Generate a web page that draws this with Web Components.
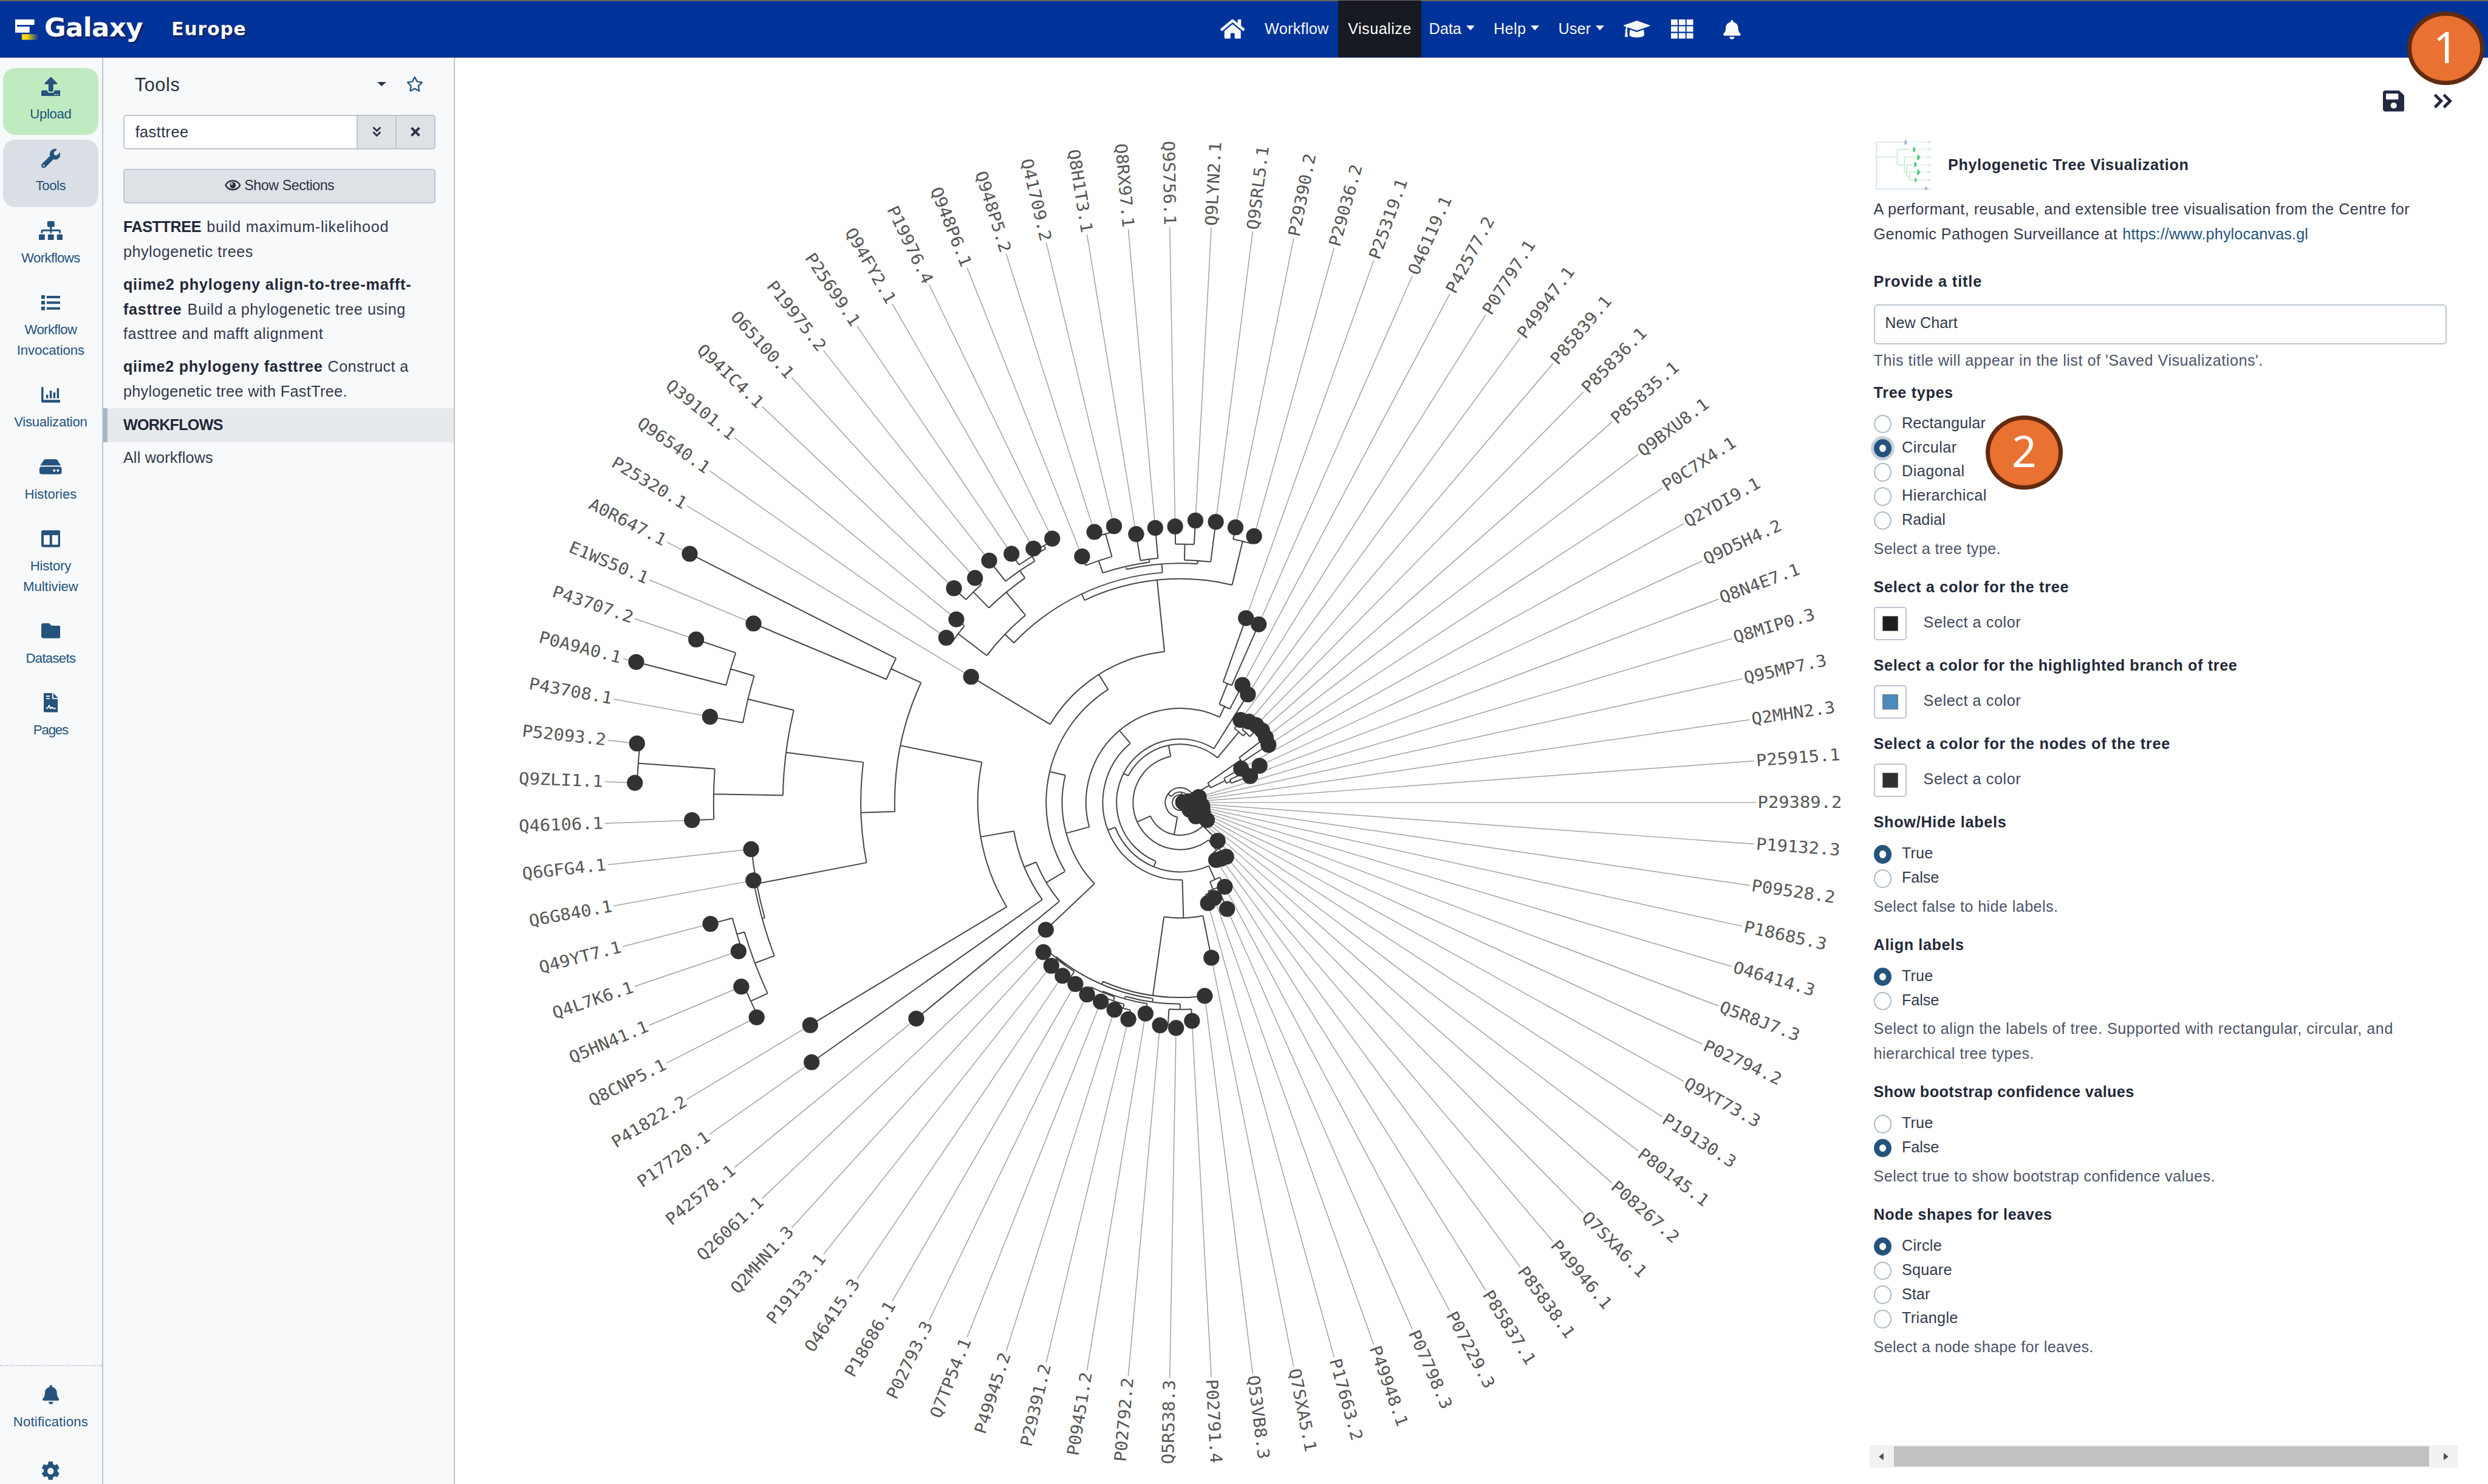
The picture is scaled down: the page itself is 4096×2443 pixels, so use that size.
<!DOCTYPE html>
<html lang="en">
<head>
<meta charset="utf-8">
<title>Galaxy Europe</title>
<style>
html,body{margin:0;padding:0;width:4096px;height:2443px;overflow:hidden;background:#fff}
</style>
</head>
<body>
<galaxy-app></galaxy-app>
<script>
const ICONS = {
  home:['0 32 576 448','<path d="M280.37 148.26L96 300.11V464a16 16 0 0 0 16 16l112.06-.29a16 16 0 0 0 15.92-16V368a16 16 0 0 1 16-16h64a16 16 0 0 1 16 16v95.64a16 16 0 0 0 16 16.05L464 480a16 16 0 0 0 16-16V300L295.67 148.26a12.19 12.19 0 0 0-15.3 0zM571.6 251.47L488 182.56V44.05a12 12 0 0 0-12-12h-56a12 12 0 0 0-12 12v72.61L318.47 43a48 48 0 0 0-61 0L4.34 251.47a12 12 0 0 0-1.6 16.9l25.5 31A12 12 0 0 0 45.15 301l235.22-193.74a12.19 12.19 0 0 1 15.3 0L530.9 301a12 12 0 0 0 16.9-1.6l25.5-31a12 12 0 0 0-1.7-16.93z"/>'],
  upload:['0 0 512 512','<path d="M296 384h-80c-13.3 0-24-10.7-24-24V192h-87.7c-17.8 0-26.7-21.5-14.1-34.1L242.3 5.7c7.5-7.5 19.8-7.5 27.3 0l152.2 152.2c12.6 12.6 3.7 34.1-14.1 34.1H320v168c0 13.3-10.7 24-24 24zm216-8v112c0 13.3-10.7 24-24 24H24c-13.3 0-24-10.7-24-24V376c0-13.3 10.7-24 24-24h136v8c0 30.9 25.1 56 56 56h80c30.9 0 56-25.1 56-56v-8h136c13.3 0 24 10.7 24 24zm-124 88c0-11-9-20-20-20s-20 9-20 20 9 20 20 20 20-9 20-20zm64 0c0-11-9-20-20-20s-20 9-20 20 9 20 20 20 20-9 20-20z"/>'],
  wrench:['0 0 512 512','<path d="M507.73 109.1c-2.24-9.03-13.54-12.09-20.12-5.51l-74.36 74.36-67.88-11.31-11.31-67.88 74.36-74.36c6.62-6.62 3.43-17.9-5.66-20.16-47.38-11.74-99.55.91-136.58 37.93-39.64 39.64-50.55 97.1-34.05 147.2L18.74 402.76c-24.99 24.99-24.99 65.51 0 90.5 24.99 24.99 65.51 24.99 90.5 0l213.21-213.21c50.12 16.71 107.47 5.68 147.37-34.22 37.07-37.07 49.7-89.32 37.91-136.73zM64 472c-13.25 0-24-10.75-24-24 0-13.26 10.75-24 24-24s24 10.74 24 24c0 13.25-10.75 24-24 24z"/>'],
  sitemap:['0 0 640 512','<path d="M128 352H32c-17.67 0-32 14.33-32 32v96c0 17.67 14.33 32 32 32h96c17.67 0 32-14.33 32-32v-96c0-17.67-14.33-32-32-32zm-24-80h192v48h48v-48h192v48h48v-57.59c0-21.17-17.23-38.41-38.41-38.41H344v-64h40c17.67 0 32-14.33 32-32V32c0-17.67-14.33-32-32-32H256c-17.67 0-32 14.33-32 32v96c0 17.67 14.33 32 32 32h40v64H94.41C73.23 224 56 241.23 56 262.41V320h48v-48zm264 80h-96c-17.67 0-32 14.33-32 32v96c0 17.67 14.33 32 32 32h96c17.67 0 32-14.33 32-32v-96c0-17.67-14.33-32-32-32zm240 0h-96c-17.67 0-32 14.33-32 32v96c0 17.67 14.33 32 32 32h96c17.67 0 32-14.33 32-32v-96c0-17.67-14.33-32-32-32z"/>'],
  list:['0 0 32 27','<path d="M0 1h6v6H0zM0 10.5h6v6H0zM0 20h6v6H0zM9 2h23v4H9zM9 11.500h23v4H9zM9 21h23v4H9z"/>'],
  chart:['0 0 32 26','<path d="M1 0h2.500v21.500H31a1 1 0 0 1 1 1V25a1 1 0 0 1-1 1H2a2 2 0 0 1-2-2V1a1 1 0 0 1 1-1zM8 13h3.500v6H8zM14 6h3.500v13H14zM20 9h3.500v10H20zM26 2h3.500v17H26z"/>'],
  hdd:['0 64 576 384','<path d="M576 304v96c0 26.51-21.49 48-48 48H48c-26.51 0-48-21.49-48-48v-96c0-26.51 21.49-48 48-48h480c26.51 0 48 21.49 48 48zm-48-80a79.557 79.557 0 0 1 30.777 6.165L462.25 85.374A48.003 48.003 0 0 0 422.311 64H153.689a48 48 0 0 0-39.938 21.374L17.223 230.165A79.557 79.557 0 0 1 48 224h480zm-48 96c-17.673 0-32 14.327-32 32s14.327 32 32 32 32-14.327 32-32-14.327-32-32-32zm-96 0c-17.673 0-32 14.327-32 32s14.327 32 32 32 32-14.327 32-32-14.327-32-32-32z"/>'],
  columns:['0 32 512 448','<path d="M464 32H48C21.49 32 0 53.49 0 80v352c0 26.51 21.49 48 48 48h416c26.51 0 48-21.49 48-48V80c0-26.51-21.49-48-48-48zM224 416H64V160h160v256zm224 0H288V160h160v256z"/>'],
  folder:['0 64 512 384','<path d="M464 128H272l-64-64H48C21.49 64 0 85.49 0 112v288c0 26.51 21.49 48 48 48h416c26.51 0 48-21.49 48-48V176c0-26.51-21.49-48-48-48z"/>'],
  page:['0 0 24 32','<path fill-rule="evenodd" d="M1.500 0H14v8.500a1.500 1.500 0 0 0 1.500 1.500H24v20.500a1.500 1.500 0 0 1-1.500 1.500h-21A1.500 1.500 0 0 1 0 30.500v-29A1.500 1.500 0 0 1 1.500 0zM4 4v2h6V4zM4 8v2h6V8zM4 26h3l2-3 1.500 3.500h2L14 25l1.500 1.500H20V24.500h-3.500L14 22.500l-2 1.500-2.500-4.500h-1L6 24H4z"/><path d="M16 0l8 8h-8z"/>'],
  bell:['0 0 448 512','<path d="M224 512c35.32 0 63.97-28.65 63.97-64H160.03c0 35.35 28.65 64 63.97 64zm215.39-149.71c-19.32-20.76-55.47-51.99-55.47-154.29 0-77.7-54.48-139.9-127.94-155.16V32c0-17.67-14.32-32-31.98-32s-31.98 14.33-31.98 32v20.84C118.56 68.1 64.08 130.3 64.08 208c0 102.3-36.15 133.53-55.47 154.29-6 6.45-8.66 14.16-8.61 21.71.11 16.4 12.98 32 32.1 32h383.8c19.12 0 32-15.6 32.1-32 .05-7.55-2.61-15.27-8.61-21.71z"/>'],
  cog:['-16 -16 32 32','<path fill-rule="evenodd" d="M-3.700-16h7.400l.7 4.300 2.900 1.700 4.100-1.600 3.800 6.500-3.400 2.700v3.300l3.400 2.700-3.800 6.500-4.100-1.600-2.900 1.700-.7 4.300h-7.400l-.7-4.300-2.900-1.700-4.100 1.600-3.800-6.500 3.400-2.700v-3.300l-3.400-2.700 3.800-6.500 4.100 1.600 2.900-1.700zM0-5.500a5.500 5.500 0 1 0 0 11a5.500 5.500 0 1 0 0-11z"/>'],
  save:['0 32 448 448','<path d="M433.941 129.941l-83.882-83.882A48 48 0 0 0 316.118 32H48C21.49 32 0 53.49 0 80v352c0 26.51 21.49 48 48 48h352c26.51 0 48-21.49 48-48V163.882a48 48 0 0 0-14.059-33.941zM224 416c-35.346 0-64-28.654-64-64 0-35.346 28.654-64 64-64s64 28.654 64 64c0 35.346-28.654 64-64 64zm96-304.52V212c0 6.627-5.373 12-12 12H76c-6.627 0-12-5.373-12-12V108c0-6.627 5.373-12 12-12h228.52c3.183 0 6.235 1.264 8.485 3.515l3.48 3.48A11.996 11.996 0 0 1 320 111.48z"/>'],
  star:['20 0 536 512','<path d="M528.1 171.5L382 150.2 316.7 17.8c-11.7-23.6-45.6-23.9-57.4 0L194 150.2 47.9 171.5c-26.2 3.8-36.7 36.1-17.7 54.6l105.7 103-25 145.5c-4.500 26.300 23.200 46 46.400 33.700L288 439.600l130.700 68.700c23.200 12.200 50.900-7.400 46.400-33.700l-25-145.500 105.700-103c19-18.500 8.500-50.800-17.700-54.600zM388.600 312.300l23.700 138.400L288 385.400l-124.300 65.300 23.700-138.400-100.600-98 139-20.200 62.200-126 62.200 126 139 20.200-100.600 98z"/>'],
  eye:['0 0 28 18','<path fill="none" stroke="currentColor" stroke-width="2.600" d="M1.500 9C4 4.200 8.500 1.500 14 1.500S24 4.200 26.500 9C24 13.800 19.500 16.500 14 16.500S4 13.800 1.500 9z"/><circle cx="14" cy="9" r="5.200"/><circle cx="12.300" cy="7" r="1.600" fill="#dee2e6"/>'],
  grad:['0 0 44 28','<path d="M22 0l21.500 7.500a.8.800 0 0 1 0 1.500L22 16.500 7 11.300c-.8.700-1.300 2-1.400 3.200 1.200.8 1.200 2.300.2 3.100L7 27H2l1.200-9.400c-1-.8-1-2.300.1-3.100.1-1.600.5-3 1.300-4.100L.5 9a.8.800 0 0 1 0-1.500z"/><path d="M10.500 15L22 19l11.500-4 1 8.500c0 2.500-5.600 4.500-12.500 4.500S9.500 26 9.500 23.500z"/>'],
  grid:['0 0 37 32','<path d="M0 0h11v9.300H0zM13 0h11v9.300H13zM26 0h11v9.300H26zM0 11.300h11v9.300H0zM13 11.300h11v9.300H13zM26 11.300h11v9.300H26zM0 22.700h11V32H0zM13 22.700h11V32H13zM26 22.700h11V32H26z"/>'],
  caret:['0 0 14 7','<path d="M0 0h14L7 7z"/>'],
  down2:['0 0 16 18','<path fill="none" stroke="currentColor" stroke-width="3" d="M1.500 1.500L8 7.500l6.500-6M1.500 9.500L8 15.500l6.500-6"/>'],
  right2:['0 0 32 24','<path fill="none" stroke="currentColor" stroke-width="4.800" d="M2.500 2L13 12 2.500 22M17.500 2L28 12 17.500 22"/>'],
  times:['0 0 16 16','<path fill="none" stroke="currentColor" stroke-width="4" d="M1.500 1.500l13 13M14.500 1.500l-13 13"/>'],
  left:['0 0 8 12','<path d="M8 0v12L0 6z"/>'],
  right:['0 0 8 12','<path d="M0 0v12l8-6z"/>']
};

function define(name, render) {
  customElements.define(name, class extends HTMLElement {
    connectedCallback() {
      if (this.shadowRoot) return;
      const root = this.attachShadow({mode:'open'});
      root.innerHTML = render(this);
    }
  });
}
const A = (el, n, d='') => el.getAttribute(n) ?? d;

/* Icon stretched to a given box */
define('gx-icon', el => {
  const [vb, body] = ICONS[A(el,'name')];
  return `<style>:host{display:block;flex:none;width:${A(el,'w')}px;height:${A(el,'h')}px}svg{display:block;width:100%;height:100%;fill:currentColor}</style>
  <svg viewBox="${vb}" preserveAspectRatio="none">${body}</svg>`;
});

/* One line of text tracked to a given width */
const pen = document.createElement('canvas').getContext('2d');
customElements.define('fit-text', class extends HTMLElement {
  connectedCallback() {
    if (this.shadowRoot) return;
    this.attachShadow({mode:'open'}).innerHTML =
      '<style>:host{display:inline-block;white-space:pre}span{display:inline-block}</style><span><slot></slot></span>';
    const w = +A(this,'w'), t = this.textContent, cs = getComputedStyle(this), fs = parseFloat(cs.fontSize);
    pen.font = `${cs.fontWeight} 100px ${cs.fontFamily}`;
    const m = pen.measureText(t).width / 100;
    this.shadowRoot.querySelector('span').style.letterSpacing = ((w / fs - m) / t.length).toFixed(4) + 'em';
    this.style.width = w + 'px';
  }
});

define('nav-item', el => `<style>
  :host{display:flex;align-items:center;box-sizing:border-box;height:94px;padding:0 16px;color:#f8f9fa;font-size:25.500px}
  :host([active]){background:#171a22;color:#fff}
  gx-icon{margin:0 0 4px 8px}
  </style><fit-text w="${A(el,'w')}">${A(el,'label')}</fit-text>${el.hasAttribute('menu')?'<gx-icon name="caret" w="14" h="8"></gx-icon>':''}`);

define('gx-masthead', () => `<style>
  :host{display:flex;align-items:center;box-sizing:border-box;height:96px;flex:none;background:#003399;border-top:2.500px solid #66665e;border-bottom:1px solid #1d3f8f;color:#fff}
  .brand{display:flex;align-items:center;width:2035px;font-family:"DejaVu Sans",sans-serif;font-weight:bold;text-shadow:2px 2px 3px #0a1d55}
  .brand svg{margin-left:25px;width:40px;height:34px;margin-top:2px}
  .g{font-size:44px;margin:-5px 0 0 9px}.e{font-size:30px;margin:0 0 0 48px}
  gx-icon{color:#f8f9fa}
  </style>
  <div class="brand"><svg viewBox="0 0 40 34"><defs><linearGradient id="y"><stop offset=".3" stop-color="#ffd800"/><stop offset="1" stop-color="#ffd800" stop-opacity="0"/></linearGradient></defs>
  <path fill="#fff" d="M0 0h32v9H0zM0 12h24v10H0zM0 8h3v6H0z"/><path fill="url(#y)" d="M11 24.500h28V34H11z"/></svg>
  <fit-text class="g" w="164">Galaxy</fit-text><fit-text class="e" w="125">Europe</fit-text></div>
  <gx-icon name="home" w="41" h="32"></gx-icon>
  <nav-item style="margin-left:17px" label="Workflow" w="107"></nav-item>
  <nav-item style="margin-right:-3px" active label="Visualize" w="106"></nav-item>
  <nav-item label="Data" menu w="54"></nav-item><nav-item label="Help" menu w="54"></nav-item><nav-item label="User" menu w="54" style="padding-right:0"></nav-item>
  <gx-icon style="margin-left:33px" name="grad" w="44" h="28"></gx-icon>
  <gx-icon style="margin-left:35px" name="grid" w="37" h="32"></gx-icon>
  <gx-icon style="margin:2px 0 0 50px" name="bell" w="29" h="32"></gx-icon>`);

define('activity-item', el => `<style>
  :host{display:flex;flex-direction:column;align-items:center;box-sizing:border-box;width:159px;flex:none;padding-bottom:18px;border-radius:20px;color:#25537b;background:${A(el,'bg','transparent')};font-size:22.500px;line-height:34px}
  .i{height:60px;display:flex;align-items:center;box-sizing:border-box;padding-top:3px}
  </style><div class="i"><gx-icon name="${A(el,'icon')}" w="${A(el,'iw')}" h="${A(el,'ih')}"></gx-icon></div>
  ${A(el,'label').split('|').map((t,i)=>`<fit-text w="${A(el,'w').split('|')[i]}">${t}</fit-text>`).join('')}`);

define('activity-bar', () => `<style>
  :host{display:flex;flex-direction:column;justify-content:space-between;box-sizing:border-box;width:172.500px;flex:none;background:#f8f9fb;border-right:2.500px solid #bdc6d0}
  div{display:flex;flex-direction:column;gap:8px;padding:17px 0 0 5px}
  .b{border-top:2.500px dotted #bdc6d0;height:199px;box-sizing:border-box;padding-top:16px;gap:16px;overflow:hidden}
  </style><div>
  <activity-item bg="#c0ebc0" icon="upload" iw="32" ih="32" label="Upload" w="69"></activity-item>
  <activity-item bg="#dadfe5" icon="wrench" iw="32" ih="32" label="Tools" w="50"></activity-item>
  <activity-item icon="sitemap" iw="40" ih="32" label="Workflows" w="98"></activity-item>
  <activity-item icon="list" iw="32" ih="27" label="Workflow|Invocations" w="87|113"></activity-item>
  <activity-item icon="chart" iw="32" ih="26" label="Visualization" w="122"></activity-item>
  <activity-item icon="hdd" iw="37" ih="25" label="Histories" w="87"></activity-item>
  <activity-item icon="columns" iw="32" ih="28" label="History|Multiview" w="68|92"></activity-item>
  <activity-item icon="folder" iw="32" ih="25" label="Datasets" w="83"></activity-item>
  <activity-item icon="page" iw="24" ih="32" label="Pages" w="58"></activity-item></div>
  <div class="b"><activity-item icon="bell" iw="28" ih="32" label="Notifications" w="125"></activity-item>
  <activity-item icon="cog" iw="31" ih="32" label=" " w="1"></activity-item></div>`);

define('tool-entry', () => `<style>:host{display:block;font-size:25.500px;line-height:41px;color:#33384a;padding-left:33px;margin-bottom:14px}</style><slot></slot>`);

define('tool-panel', () => `<style>
  :host{display:flex;flex-direction:column;box-sizing:border-box;width:586.500px;flex:none;background:#f8f9fb;border-right:2.500px solid #bdc6d0;color:#2c3143}
  .head{display:flex;align-items:center;height:89px;padding:0 0 0 52px;font-size:31px}
  .head fit-text{margin-top:2px}
  .sp{flex:1}
  .search{display:flex;box-sizing:border-box;margin:6px 0 0 33px;width:521px;height:58px;border:2.500px solid #bcc5d0;border-radius:5px;background:#fff;overflow:hidden;font-size:25.500px}
  .in{flex:1;display:flex;align-items:center;padding-left:18px}
  .bt{width:65px;box-sizing:border-box;background:#dee2e6;border-left:2.500px solid #bcc5d0;display:flex;align-items:center;justify-content:center}
  .show{display:flex;align-items:center;justify-content:center;gap:6px;box-sizing:border-box;margin:33px 0 19px 33px;width:521px;height:57px;border:2.500px solid #bcc5d0;border-radius:5px;background:#dee2e6;font-size:23.500px;padding-bottom:3px}
  b{font-weight:bold;color:#222838}
  .wf{height:57px;box-sizing:border-box;display:flex;align-items:center;background:#e7eaed;border-left:8px solid #a9b5c3;padding-left:26px;font-size:25.500px;margin:-6px 0 5px;padding-bottom:1px}
  </style>
  <div class="head"><fit-text w="76">Tools</fit-text><span class="sp"></span><gx-icon name="caret" w="15" h="7"></gx-icon><gx-icon style="margin:0 52px 0 35px;color:#25537b" name="star" w="26" h="25"></gx-icon></div>
  <div class="search"><div class="in"><fit-text w="89">fasttree</fit-text></div><div class="bt"><gx-icon name="down2" w="15" h="18"></gx-icon></div><div class="bt"><gx-icon name="times" w="16" h="16"></gx-icon></div></div>
  <div class="show"><gx-icon name="eye" w="27" h="18"></gx-icon><fit-text w="150">Show Sections</fit-text></div>
  <tool-entry><b><fit-text w="130">FASTTREE</fit-text></b> <fit-text w="304" style="margin-left:2px">build maximum-likelihood</fit-text><br><fit-text w="217">phylogenetic trees</fit-text></tool-entry>
  <tool-entry><b><fit-text w="481">qiime2 phylogeny align-to-tree-mafft-</fit-text><br><fit-text w="98">fasttree</fit-text></b> <fit-text w="364" style="margin-left:2px">Build a phylogenetic tree using</fit-text><br><fit-text w="334">fasttree and mafft alignment</fit-text></tool-entry>
  <tool-entry><b><fit-text w="333">qiime2 phylogeny fasttree</fit-text></b> <fit-text w="135" style="margin-left:1px">Construct a</fit-text><br><fit-text w="374">phylogenetic tree with FastTree.</fit-text></tool-entry>
  <div class="wf"><b><fit-text w="166">WORKFLOWS</fit-text></b></div>
  <tool-entry><fit-text w="150">All workflows</fit-text></tool-entry>`);

/* Circular phylogram: leaves are numbered clockwise from three o'clock */
const LABELS = 'P29389.2 P19132.3 P09528.2 P18685.3 O46414.3 Q5R8J7.3 P02794.2 Q9XT73.3 P19130.3 P80145.1 P08267.2 Q7SXA6.1 P49946.1 P85838.1 P85837.1 P07229.3 P07798.3 P49948.1 P17663.2 Q7SXA5.1 Q53VB8.3 P02791.4 Q5R538.3 P02792.2 P09451.2 P29391.2 P49945.2 Q7TP54.1 P02793.3 P18686.1 O46415.3 P19133.1 Q2MHN1.3 Q26061.1 P42578.1 P17720.1 P41822.2 Q8CNP5.1 Q5HN41.1 Q4L7K6.1 Q49YT7.1 Q6G840.1 Q6GFG4.1 Q46106.1 Q9ZLI1.1 P52093.2 P43708.1 P0A9A0.1 P43707.2 E1WS50.1 A0R647.1 P25320.1 Q96540.1 Q39101.1 Q94IC4.1 O65100.1 P19975.2 P25699.1 Q94FY2.1 P19976.4 Q948P6.1 Q948P5.2 Q41709.2 Q8H1T3.1 Q8RX97.1 Q9S756.1 Q9LYN2.1 Q9SRL5.1 P29390.2 P29036.2 P25319.1 O46119.1 P42577.2 P07797.1 P49947.1 P85839.1 P85836.1 P85835.1 Q9BXU8.1 P0C7X4.1 Q2YDI9.1 Q9D5H4.2 Q8N4E7.1 Q8MIP0.3 Q95MP7.3 Q2MHN2.3 P25915.1'.split(' ');
const RADII = [18,24,37,38,36,38,42,30,53.4,20,35,89.4,118.7,116,113,159,194,169,174,264,325,364.6,376,373,356.6,371.5,362.4,357.5,355.7,349.4,349.2,346.7,338,308.4,568.7,751.8,720,791.9,793.6,777.1,809,723.4,719.6,814.6,909.9,911,797,936.9,851.7,771.5,917,406.8,477.1,482.3,519.5,507.2,514,501,489,489,441.8,473.3,473.9,453.6,459.8,460.4,471,471.9,468,460.9,326.5,324.7,221.8,212.8,170.7,177,181,182,179.4,175.9,116.4,146,124.7,32.4,28,14,5];
const n = (r, ...c) => ({r, c});
const N1 = n(476, n(531.3,50,49), n(532.5, n(662.5, n(741,n(782,48,47),46), n(778,n(906,45,44),43)), n(719,42,n(723.4,41,n(758,n(771,40,39),n(789,38,37))))));
const N6 = n(223.5, n(260,n(281.3,n(337.5,N1,36),35),34),
  n(253, 51, n(373,
    n(384.5, n(405, n(465,52,53), n(455, n(492,54,55), n(470,56,n(479,57,n(485,58,59))))),
      n(399, n(404,n(425.5,60,n(465,61,62)),n(409,63,64)), n(404.5,n(431,65,66),67))),
    n(448,68,69))));
const N8 = n(157, n(196.8,33,N6), n(176.5,n(213.5,70,71),72));
const D = n(192.5, 19, n(325,20,n(330, n(336,n(345,21,n(371,22,23)),n(340,24,n(342,n(349,n(356,25,26),27),28))), n(331.5,32,n(332.5,31,n(345,29,30))))));
const N10 = n(115.8, n(141,15,n(155,16,n(159,17,18))), n(129,D,N8));
const N13 = n(78.5, n(97.3, n(106,N10,73), n(153,74,n(160,75,n(170,76,77)))), n(100,12,n(108,13,14)));
const ROOT = n(13, n(17.5, n(24.8, n(54.5,11,N13), n(56.5,n(123.5,78,79),n(83.5,80,n(91,81,82)))), 83), 3);

function treeSvg() {
  const CX = 1968.3, CY = 1338, STEP = 2*Math.PI/LABELS.length, R = 960;
  const pt = (r,k) => `${(CX+r*Math.cos(k*STEP)).toFixed(1)} ${(CY+r*Math.sin(k*STEP)).toFixed(1)}`;
  let d = '';
  const walk = node => {
    if (typeof node === 'number') return {k:node, r:RADII[node]};
    const kids = node.c.map(walk);
    const ks = kids.map(c => c.k), lo = Math.min(...ks), hi = Math.max(...ks);
    kids.forEach(c => d += `M${pt(c.r,c.k)}L${pt(node.r,c.k)}`);
    d += `M${pt(node.r,lo)}A${node.r} ${node.r} 0 ${(hi-lo)*STEP>Math.PI?1:0} 1 ${pt(node.r,hi)}`;
    return {k:(lo+hi)/2, r:node.r};
  };
  walk(ROOT);
  let leaders = '', dots = '', texts = '';
  LABELS.forEach((t,k) => {
    const a = k*360/LABELS.length, flip = a > 90 && a < 270;
    leaders += `M${pt(RADII[k],k)}L${pt(R,k)}`;
    const [x,y] = pt(RADII[k],k).split(' ');
    dots += `<circle cx="${x}" cy="${y}" r="13.300"/>`;
    const [tx,ty] = pt(R+3,k).split(' ');
    texts += `<text x="${tx}" y="${ty}" dy="9" text-anchor="${flip?'end':'start'}" textLength="140.500" lengthAdjust="spacingAndGlyphs" transform="rotate(${(flip?a+180:a).toFixed(2)} ${tx} ${ty})">${t}</text>`;
  });
  return `<svg viewBox="759 96 2341 2379"><path d="${leaders}" fill="none" stroke="#a0a0a0" stroke-width="1.500"/><path d="${d}" fill="none" stroke="#444" stroke-width="2"/><g fill="#323232">${dots}</g><g fill="#555" font-family="'DejaVu Sans Mono',monospace" font-size="27.500">${texts}</g></svg>`;
}
define('phylo-tree', () => `<style>:host{display:block;width:2341px;height:2379px;flex:none;background:#fff}svg{display:block;width:100%;height:100%}</style>${treeSvg()}`);

define('radio-row', el => `<style>
  :host{display:flex;align-items:center;height:40.300px;font-size:25.500px}
  i{display:block;box-sizing:border-box;width:30px;height:31px;border-radius:50%;border:2.600px solid #adb9c8;background:#fff;margin:1px 17px 0 0}
  :host([on]) i{border:9.500px solid #25537b}
  :host([focus]) i{box-shadow:0 0 0 5px #c5d0db}
  fit-text{margin-top:-3px}
  </style><i></i><fit-text w="${A(el,'w')}">${A(el,'label')}</fit-text>`);

define('color-row', el => `<style>
  :host{display:flex;align-items:center;font-size:25.500px;height:56px}
  i{display:flex;align-items:center;justify-content:center;box-sizing:border-box;width:55px;height:56px;border:2.600px solid #bcc5d0;border-radius:5px;margin-right:28px}
  i::before{content:"";width:24px;height:24px;border:2px solid #777;background:${A(el,'color')}}
  fit-text{margin-top:-4px;color:#40465a}
  </style><i></i><fit-text w="163">Select a color</fit-text>`);

define('form-section', el => `<style>
  :host{display:block;margin-bottom:${A(el,'gap','23.300')}px;line-height:41px;font-size:25.500px;color:#343a4c}
  .t{display:block;font-weight:bold;color:#222838;margin-bottom:${A(el,'lead','12.500')}px}
  .h{display:block;margin-top:6px;color:#4d5468}
  </style><div class="t"><fit-text w="${A(el,'w')}">${A(el,'label')}</fit-text></div><slot></slot><div class="h"><slot name="help"></slot></div>`);

define('gx-badge', el => `<style>:host{position:absolute;left:${A(el,'x')}px;top:${A(el,'y')}px;box-sizing:border-box;width:129px;height:123px;border:8px solid #612b10;border-radius:50%;background:#e97132;color:#fff;font:72px/103px "Noto Sans",sans-serif;text-align:center}</style><slot></slot>`);

define('viz-panel', () => `<style>
  :host{display:flex;flex-direction:column;flex:1;box-sizing:border-box;padding-left:24.500px;background:#fff;color:#343a4c;font-size:25.500px;line-height:41px}
  .bar{display:flex;align-items:center;height:144px;box-sizing:border-box;color:#222940;padding:1px 0 0 849px}
  .hd{display:flex;align-items:center;gap:27px;height:85px;margin-top:-7.500px;font-weight:bold;color:#222838}
  .hd svg{width:97px;height:85px;display:block}
  .desc{margin:10.500px 0 37px;line-height:42px}
  .desc a{color:#25537b}
  .in{display:flex;align-items:center;box-sizing:border-box;width:956px;height:66px;border:2.600px solid #bcc5d0;border-radius:6px;padding:0 0 5px 17px}
  .scroll{display:flex;align-items:center;justify-content:space-between;box-sizing:border-box;width:982px;height:37px;background:#f1f1f1;margin:144px 0 0 -7px;padding:0 16px;color:#505050}
  .th{width:893px;height:33px;background:#c1c1c1;margin-right:8px}
  </style>
  <div class="bar"><gx-icon name="save" w="36" h="35"></gx-icon><gx-icon style="margin-left:48px" name="right2" w="32" h="25"></gx-icon></div>
  <div class="hd"><svg viewBox="0 0 97 85" fill="none" stroke-width="2"><path stroke="#dbe5f0" d="M4 4h49M4 4v78h91"/><path stroke="#eef2f6" d="M56 4h38"/>
   <path stroke="#c9efd6" d="M4 29h35M60 16H43q-4 0-4 4v18q0 4 4 4h8M70 29H51v25h4M64 42H55v20h5M72 54H60v13h8" /><path stroke="#e9f7ee" d="M70 16h24M78 29h16M72 42h22M78 54h16M74 67h22"/>
   <path fill="#9fbbd6" d="M51 1h4v7h-4zM85 79h4v6h-4z"/><path fill="#5bcb83" d="M65 13h4v7h-4zM74 25l4 4-4 5h-2v-9zM67 38h4v7h-4zM74 50l4 4-4 5h-2v-9zM68 63l5 4-5 5z"/><path fill="#e3edea" d="M89 2h6v4h-6zM89 14h6v4h-6zM89 27h6v4h-6zM89 40h6v4h-6zM89 52h6v4h-6zM89 65h6v4h-6z"/></svg><fit-text w="402">Phylogenetic Tree Visualization</fit-text></div>
  <div class="desc"><fit-text w="896">A performant, reusable, and extensible tree visualisation from the Centre for</fit-text><br><fit-text w="407">Genomic Pathogen Surveillance at</fit-text><a><fit-text style="margin-left:8px" w="310">https://www.phylocanvas.gl</fit-text></a></div>
  <form-section label="Provide a title" w="181" lead="18" gap="13.500"><div class="in"><fit-text w="121">New Chart</fit-text></div><fit-text slot="help" w="650">This title will appear in the list of 'Saved Visualizations'.</fit-text></form-section>
  <form-section label="Tree types" w="133" lead="11"><radio-row label="Rectangular" w="140"></radio-row><radio-row on focus label="Circular" w="92"></radio-row><radio-row label="Diagonal" w="105"></radio-row><radio-row label="Hierarchical" w="142"></radio-row><radio-row label="Radial" w="73"></radio-row><fit-text slot="help" w="212">Select a tree type.</fit-text></form-section>
  <form-section label="Select a color for the tree" w="326" gap="15.300"><color-row color="#1f1f1f"></color-row></form-section>
  <form-section label="Select a color for the highlighted branch of tree" w="607" gap="15.300"><color-row color="#4c8bbd"></color-row></form-section>
  <form-section label="Select a color for the nodes of the tree" w="495" gap="15.300"><color-row color="#303030"></color-row></form-section>
  <form-section label="Show/Hide labels" w="222"><radio-row on label="True" w="52"></radio-row><radio-row label="False" w="62"></radio-row><fit-text slot="help" w="308">Select false to hide labels.</fit-text></form-section>
  <form-section label="Align labels" w="151"><radio-row on label="True" w="52"></radio-row><radio-row label="False" w="62"></radio-row><fit-text slot="help" w="867">Select to align the labels of tree. Supported with rectangular, circular, and</fit-text><br slot="help"><fit-text slot="help" w="268">hierarchical tree types.</fit-text></form-section>
  <form-section label="Show bootstrap confidence values" w="435"><radio-row label="True" w="52"></radio-row><radio-row on label="False" w="62"></radio-row><fit-text slot="help" w="570">Select true to show bootstrap confidence values.</fit-text></form-section>
  <form-section label="Node shapes for leaves" w="298" gap="0"><radio-row on label="Circle" w="67"></radio-row><radio-row label="Square" w="84"></radio-row><radio-row label="Star" w="47"></radio-row><radio-row label="Triangle" w="94"></radio-row><fit-text slot="help" w="367">Select a node shape for leaves.</fit-text></form-section>
  <div class="scroll"><gx-icon name="left" w="8" h="12"></gx-icon><div class="th"></div><gx-icon name="right" w="8" h="12"></gx-icon></div>`);

define('galaxy-app', () => `<style>
  :host{display:flex;flex-direction:column;position:relative;width:4149px;height:2475px;zoom:.98723;overflow:hidden;background:#fff;font-family:"Liberation Sans",Arial,sans-serif}
  .body{display:flex;flex:1;min-height:0}
  </style><gx-masthead></gx-masthead><div class="body"><activity-bar></activity-bar><tool-panel></tool-panel><phylo-tree></phylo-tree><viz-panel></viz-panel></div>
  <gx-badge x="4014" y="19">1</gx-badge><gx-badge x="3311" y="693">2</gx-badge>`);
</script>
</body>
</html>
